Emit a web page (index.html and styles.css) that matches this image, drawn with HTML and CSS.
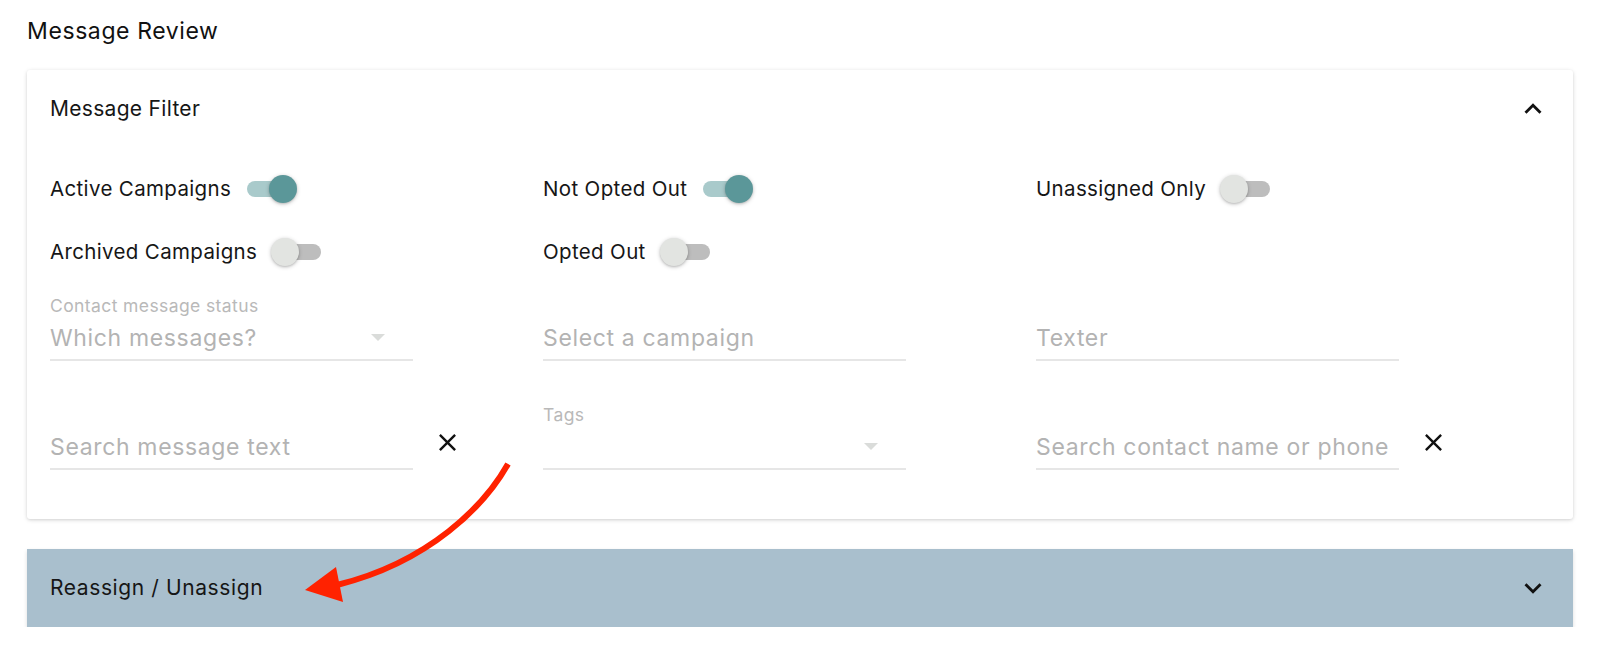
FILE: index.html
```html
<!DOCTYPE html>
<html lang="en">
<head>
<meta charset="utf-8">
<title>Message Review</title>
<link rel="stylesheet" href="styles.css">
</head>
<body>
<div class="page">
  <h1 class="page-title">Message Review</h1>

  <section class="card">
    <header class="card-header">
      <span class="card-title">Message Filter</span>
      <svg class="chevron" viewBox="0 0 24 24"><path d="M12 8l-6 6 1.41 1.41L12 10.83l4.59 4.58L18 14z"/></svg>
    </header>
    <div class="card-body">
      <div class="toggle-grid">
        <div class="toggle-cell"><span class="toggle-label">Active Campaigns</span><span class="toggle on"><span class="track"></span><span class="thumb"></span></span></div>
        <div class="toggle-cell"><span class="toggle-label">Not Opted Out</span><span class="toggle on"><span class="track"></span><span class="thumb"></span></span></div>
        <div class="toggle-cell"><span class="toggle-label">Unassigned Only</span><span class="toggle"><span class="track"></span><span class="thumb"></span></span></div>
        <div class="toggle-cell"><span class="toggle-label">Archived Campaigns</span><span class="toggle"><span class="track"></span><span class="thumb"></span></span></div>
        <div class="toggle-cell"><span class="toggle-label">Opted Out</span><span class="toggle"><span class="track"></span><span class="thumb"></span></span></div>
        <div class="toggle-cell"></div>
      </div>

      <div class="field-grid">
        <div class="field-cell">
          <div class="field">
            <span class="field-label">Contact message status</span>
            <div class="field-input"><span class="placeholder">Which messages?</span><span class="caret"></span></div>
          </div>
        </div>
        <div class="field-cell">
          <div class="field">
            <span class="field-label"></span>
            <div class="field-input"><span class="placeholder">Select a campaign</span></div>
          </div>
        </div>
        <div class="field-cell">
          <div class="field">
            <span class="field-label"></span>
            <div class="field-input"><span class="placeholder">Texter</span></div>
          </div>
        </div>

        <div class="field-cell">
          <div class="field">
            <span class="field-label"></span>
            <div class="field-input"><span class="placeholder">Search message text</span></div>
          </div>
          <svg class="clear-icon" viewBox="0 0 24 24"><path d="M19 6.41L17.59 5 12 10.59 6.41 5 5 6.41 10.59 12 5 17.59 6.41 19 12 13.41 17.59 19 19 17.59 13.41 12z"/></svg>
        </div>
        <div class="field-cell">
          <div class="field">
            <span class="field-label">Tags</span>
            <div class="field-input"><span class="placeholder"></span><span class="caret"></span></div>
          </div>
        </div>
        <div class="field-cell">
          <div class="field">
            <span class="field-label"></span>
            <div class="field-input"><span class="placeholder">Search contact name or phone</span></div>
          </div>
          <svg class="clear-icon" viewBox="0 0 24 24"><path d="M19 6.41L17.59 5 12 10.59 6.41 5 5 6.41 10.59 12 5 17.59 6.41 19 12 13.41 17.59 19 19 17.59 13.41 12z"/></svg>
        </div>
      </div>
    </div>
  </section>

  <section class="card card-collapsed">
    <header class="card-header">
      <span class="card-title">Reassign / Unassign</span>
      <svg class="chevron" viewBox="0 0 24 24"><path d="M16.59 8.59L12 13.17 7.41 8.59 6 10l6 6 6-6z"/></svg>
    </header>
  </section>
</div>

<svg class="annotation" viewBox="0 0 1600 660" width="1600" height="660">
  <path class="arrow-line" d="M508 464 C485 505 430 562 337 585"/>
  <polygon class="arrow-head" points="305,590 336,567 343,602"/>
</svg>
</body>
</html>
```
FILE: styles.css
```css
* { box-sizing: border-box; }

html, body {
  margin: 0;
  padding: 0;
  background: #ffffff;
}

body {
  font-family: Inter, "Open Sans", sans-serif;
  color: #161616;
}

.page {
  padding: 16px 27px 0 27px;
}

.page-title {
  margin: 0;
  font-size: 23px;
  font-weight: 400;
  letter-spacing: 0.6px;
  line-height: 30px;
  color: #111;
}

.card {
  margin-top: 24px;
  background: #fff;
  border-radius: 3px;
  box-shadow: 0 1px 5px rgba(0, 0, 0, 0.10), 0 1px 3px rgba(0, 0, 0, 0.10);
}

.card-collapsed {
  margin-top: 30px;
  background: #a9bfcd;
  border-radius: 0;
  box-shadow: 0 2px 4px rgba(0, 0, 0, 0.14);
}

.card-header {
  height: 78px;
  display: flex;
  align-items: center;
  justify-content: space-between;
  padding: 0 23px;
}

.card-title {
  font-size: 21px;
  letter-spacing: 0.3px;
  line-height: 30px;
  color: #161616;
}

.card-collapsed .card-title {
  font-size: 21px;
  letter-spacing: 0.6px;
}

.chevron {
  width: 34px;
  height: 34px;
  fill: #111;
}

.card-body {
  padding: 21px 44px 49px 23px;
}

.toggle-grid {
  display: grid;
  grid-template-columns: repeat(3, 1fr);
  row-gap: 23px;
}

.toggle-cell {
  height: 40px;
  display: flex;
  align-items: center;
  gap: 14px;
}

.toggle-label {
  font-size: 20.5px;
  letter-spacing: 0.35px;
  line-height: 30px;
  color: #161616;
}

.toggle {
  position: relative;
  width: 52px;
  height: 30px;
  flex: none;
}

.toggle .track {
  position: absolute;
  left: 2px;
  right: 2px;
  top: 7px;
  height: 16px;
  border-radius: 8px;
  background: #bdbdbd;
}

.toggle .thumb {
  position: absolute;
  top: 1px;
  left: 0;
  width: 28px;
  height: 28px;
  border-radius: 50%;
  background: #e2e4e1;
  box-shadow: 0 1px 4px rgba(0, 0, 0, 0.22), 0 1px 2px rgba(0, 0, 0, 0.12);
}

.toggle.on .track {
  background: #a9cacb;
}

.toggle.on .thumb {
  left: 24px;
  background: #5b9799;
}

.field-grid {
  margin-top: 23px;
  display: grid;
  grid-template-columns: repeat(3, 1fr);
  row-gap: 43px;
}

.field-cell {
  display: flex;
  align-items: flex-end;
}

.field {
  width: 363px;
  display: flex;
  flex-direction: column;
}

.field-label {
  height: 22px;
  font-size: 17.5px;
  letter-spacing: 0.4px;
  line-height: 22px;
  color: #b9b9b9;
}

.field-input {
  margin-top: 5px;
  height: 39px;
  padding-bottom: 5px;
  display: flex;
  align-items: center;
  justify-content: space-between;
  border-bottom: 2px solid #e6e6e6;
}

.placeholder {
  font-size: 23px;
  letter-spacing: 0.65px;
  line-height: 32px;
  color: #b3b3b3;
  white-space: nowrap;
}

.caret {
  width: 0;
  height: 0;
  margin-right: 28px;
  margin-top: -2px;
  border-left: 7px solid transparent;
  border-right: 7px solid transparent;
  border-top: 7px solid #dadcda;
}

.clear-icon {
  width: 29px;
  height: 29px;
  margin-left: 20px;
  margin-bottom: 13px;
  fill: #111;
  flex: none;
}

.annotation {
  position: absolute;
  left: 0;
  top: 0;
  pointer-events: none;
}

.arrow-line {
  fill: none;
  stroke: #ff2200;
  stroke-width: 6;
  stroke-linecap: butt;
}

.arrow-head {
  fill: #ff2200;
}
```
